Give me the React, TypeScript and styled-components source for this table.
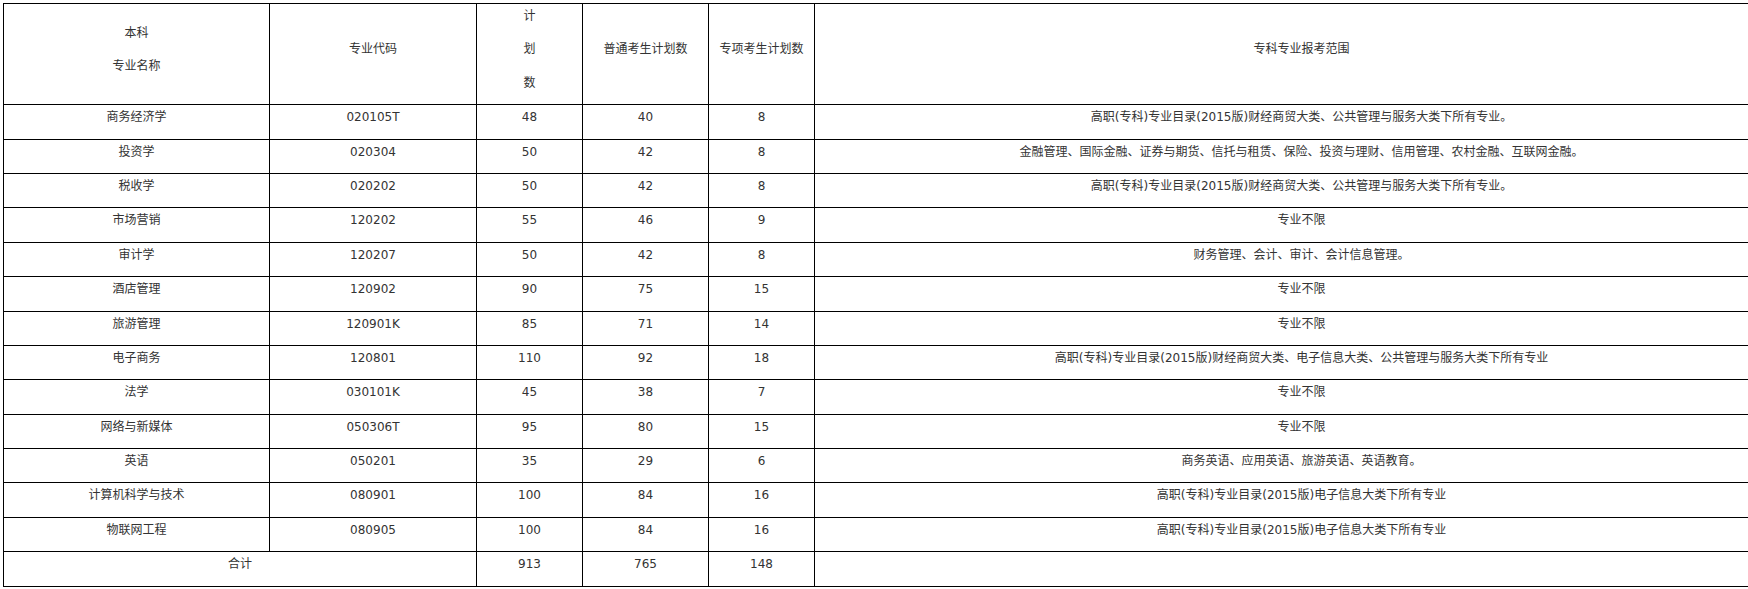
import React from "react";
import styled, { createGlobalStyle } from "styled-components";

const GlobalStyle = createGlobalStyle`
  html, body {
    margin: 0;
    padding: 0;
    background: #ffffff;
    overflow: hidden;
  }
  body {
    font-family: "DejaVu Sans", "Noto Sans CJK SC", sans-serif;
    font-size: 12px;
    color: #333333;
  }
`;

const Page = styled.div`
  padding: 3px 0 0 3px;
  width: 1800px;
`;

const Table = styled.table`
  border-collapse: collapse;
  table-layout: fixed;
  width: 1785px;
  border: 1px solid #000000;
`;

const HeadCell = styled.td`
  border: 1px solid #000000;
  padding: 0;
  text-align: center;
  vertical-align: middle;
`;

const Cell = styled.td`
  border: 1px solid #000000;
  padding: 0;
  text-align: center;
  vertical-align: top;
`;

const Para = styled.p`
  margin: 0 0 9.4px;
  line-height: 24px;
  white-space: nowrap;
`;

type Row = {
  name: string;
  code: string;
  plan: string;
  normal: string;
  special: string;
  scope: string;
};

const GENERAL = "高职(专科)专业目录(2015版)财经商贸大类、公共管理与服务大类下所有专业。";
const IT = "高职(专科)专业目录(2015版)电子信息大类下所有专业";
const ANY = "专业不限";

const rows: Row[] = [
  { name: "商务经济学", code: "020105T", plan: "48", normal: "40", special: "8", scope: GENERAL },
  { name: "投资学", code: "020304", plan: "50", normal: "42", special: "8", scope: "金融管理、国际金融、证券与期货、信托与租赁、保险、投资与理财、信用管理、农村金融、互联网金融。" },
  { name: "税收学", code: "020202", plan: "50", normal: "42", special: "8", scope: GENERAL },
  { name: "市场营销", code: "120202", plan: "55", normal: "46", special: "9", scope: ANY },
  { name: "审计学", code: "120207", plan: "50", normal: "42", special: "8", scope: "财务管理、会计、审计、会计信息管理。" },
  { name: "酒店管理", code: "120902", plan: "90", normal: "75", special: "15", scope: ANY },
  { name: "旅游管理", code: "120901K", plan: "85", normal: "71", special: "14", scope: ANY },
  { name: "电子商务", code: "120801", plan: "110", normal: "92", special: "18", scope: "高职(专科)专业目录(2015版)财经商贸大类、电子信息大类、公共管理与服务大类下所有专业" },
  { name: "法学", code: "030101K", plan: "45", normal: "38", special: "7", scope: ANY },
  { name: "网络与新媒体", code: "050306T", plan: "95", normal: "80", special: "15", scope: ANY },
  { name: "英语", code: "050201", plan: "35", normal: "29", special: "6", scope: "商务英语、应用英语、旅游英语、英语教育。" },
  { name: "计算机科学与技术", code: "080901", plan: "100", normal: "84", special: "16", scope: IT },
  { name: "物联网工程", code: "080905", plan: "100", normal: "84", special: "16", scope: IT },
];

const widths = [266, 207, 106, 126, 106, 974];

export default function App() {
  return (
    <>
      <GlobalStyle />
      <Page>
        <Table>
          <colgroup>
            {widths.map((w, i) => (
              <col key={i} style={{ width: w }} />
            ))}
          </colgroup>
          <tbody>
            <tr>
              <HeadCell>
                <Para>本科</Para>
                <Para>专业名称</Para>
              </HeadCell>
              <HeadCell>
                <Para>专业代码</Para>
              </HeadCell>
              <HeadCell>
                <Para>计</Para>
                <Para>划</Para>
                <Para>数</Para>
              </HeadCell>
              <HeadCell>
                <Para>普通考生计划数</Para>
              </HeadCell>
              <HeadCell>
                <Para>专项考生计划数</Para>
              </HeadCell>
              <HeadCell>
                <Para>专科专业报考范围</Para>
              </HeadCell>
            </tr>
            {rows.map((r) => (
              <tr key={r.code}>
                <Cell><Para>{r.name}</Para></Cell>
                <Cell><Para>{r.code}</Para></Cell>
                <Cell><Para>{r.plan}</Para></Cell>
                <Cell><Para>{r.normal}</Para></Cell>
                <Cell><Para>{r.special}</Para></Cell>
                <Cell><Para>{r.scope}</Para></Cell>
              </tr>
            ))}
            <tr>
              <Cell colSpan={2}><Para>合计</Para></Cell>
              <Cell><Para>913</Para></Cell>
              <Cell><Para>765</Para></Cell>
              <Cell><Para>148</Para></Cell>
              <Cell><Para>&nbsp;</Para></Cell>
            </tr>
          </tbody>
        </Table>
      </Page>
    </>
  );
}
